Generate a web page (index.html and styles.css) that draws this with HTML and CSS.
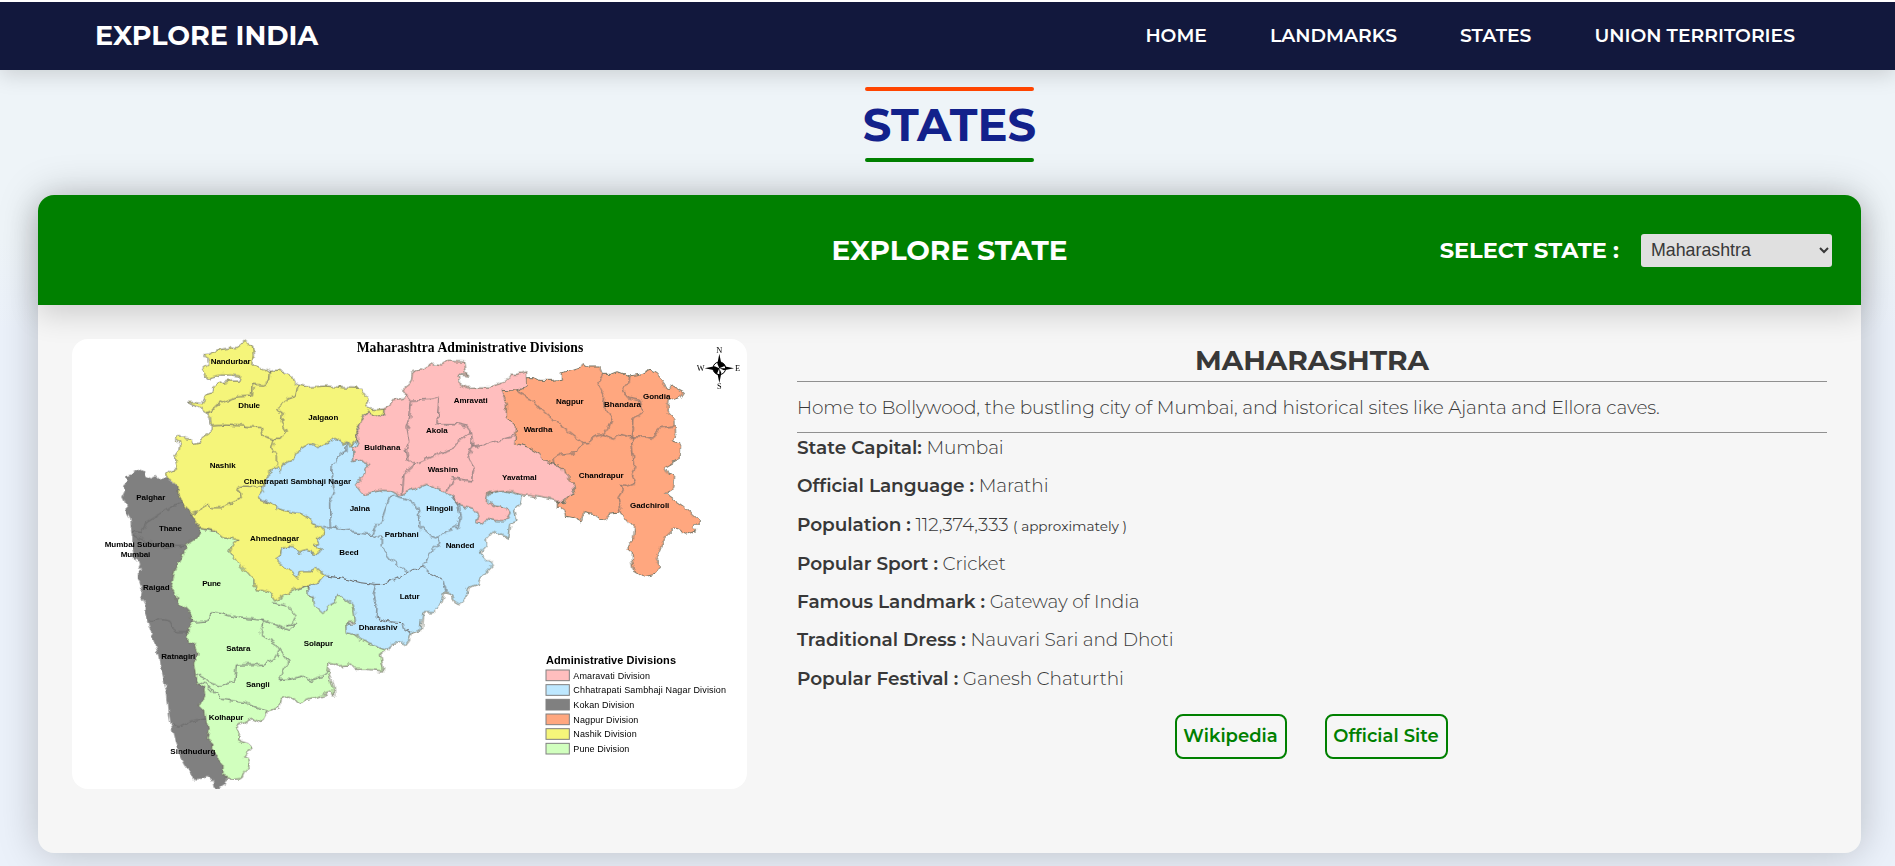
FILE: index.html
```html
<!DOCTYPE html>
<html lang="en">
<head>
<meta charset="utf-8">
<title>Explore India - States</title>
<link rel="stylesheet" href="styles.css">
</head>
<body>
<header class="navbar">
  <a class="brand">EXPLORE INDIA</a>
  <nav class="nav-links">
    <a>HOME</a><a>LANDMARKS</a><a>STATES</a><a>UNION TERRITORIES</a>
  </nav>
</header>
<main class="page">
  <h1 class="page-title"><span>STATES</span></h1>
  <section class="card">
    <div class="card-head">
      <h2 class="card-title">EXPLORE STATE</h2>
      <div class="picker">
        <label class="picker-label" for="state">SELECT STATE :</label>
        <select class="picker-select" id="state"><option>Maharashtra</option></select>
      </div>
    </div>
    <div class="card-body">
      <svg class="map" viewBox="36 27 2025 1350" role="img" aria-label="Maharashtra Administrative Divisions">
        <defs>
          <filter id="rough" x="-5%" y="-5%" width="110%" height="110%" color-interpolation-filters="sRGB">
            <feTurbulence type="fractalNoise" baseFrequency="0.045" numOctaves="2" seed="4"/>
            <feDisplacementMap in="SourceGraphic" scale="20" xChannelSelector="R" yChannelSelector="G"/>
          </filter>
        </defs>
        <g transform="translate(-1 3)">
        <g class="land" filter="url(#rough)">
          <path class="kokan nostroke" transform="translate(90 570)" d="M228-130 210-125 200-135 185-128 168-135 162-152 150-158 135-150 125-140 110-135 110-115 100-105 105-90 98-75 105-60 110-25 122-5 125 30 128 50 128 80 135 120 142 110 148 130 142 142 160 142 145 150 145 170 155 200 150 225 165 255 165 275 172 300 180 325 195 370 205 400 210 430 220 470 232 520 238 580 245 620 255 660 270 700 285 730 295 745 312 778 340 775 352 765 372 780 375 800 390 802 408 790 410 775 425 770 440 740 420 600 400 400 400 200 345 35 340 20 320-10 265-105z"/>
          <path class="pune" transform="translate(90 570)" d="M400 765 432 775 455 772 462 755 478 740 475 715 462 708 488 680 475 668 450 660 452 640 437 615 465 605 485 592 515 605 528 580 528 573 570 560 575 535 600 528 635 548 655 535 700 522 720 515 732 522 730 490 715 455 718 425 745 435 780 432 790 445 835 445 882 450 872 400 890 385 860 370 800 345 770 325 772 305 810 300 800 235 745 215 720 240 695 260 665 230 650 195 560 220 500 170 420 92 445 58 400 40 335 22 320 50 290 70 285 90 275 110 255 150 245 190 260 220 265 245 285 260 305 280 298 290 312 295 308 310 295 325 295 365 315 372 325 395 315 430 320 460 320 485 343 500 345 525 330 555 345 570 350 605 358 630 352 655 370 670 368 690 385 700 385 718 400 735z"/>
          <path class="sambhaji" d="M893 328 950 340 1100 420 1200 480 1280 490 1330 478 1360 485 1385 495 1380 520 1365 535 1372 570 1350 580 1345 622 1300 600 1280 622 1280 645 1262 665 1298 703 1260 745 1255 760 1225 770 1212 810 1200 822 1180 810 1175 790 1155 785 1145 820 1120 845 1090 845 1085 895 1055 905 1050 925 1035 945 1025 930 1000 938 980 955 945 942 900 925 885 910 860 905 858 880 888 878 880 820 835 790 825 815 805 825 790 848 765 825 760 800 745 785 745 765 700 760 640 700 630 660 660 620 620 510 590 495 610 430 665 395 740 330 850 320z"/>
          <path class="nashik" d="M432 72 452 68 480 55 505 52 515 47 532 50 545 40 557 31 565 38 578 44 581 70 577 95 590 105 610 112 632 121 655 117 680 124 697 135 705 155 715 162 750 168 800 165 850 170 905 172 915 190 926 205 920 220 928 233 950 236 972 234 972 248 958 258 940 250 925 243 908 262 905 275 892 292 888 310 893 328 878 335 875 346 862 332 850 340 845 330 825 322 815 332 795 340 775 350 760 340 745 340 720 355 705 372 700 388 685 392 665 405 662 420 652 410 640 415 622 430 618 450 610 480 600 495 605 508 635 520 650 532 680 540 700 545 725 548 750 565 757 578 780 585 793 600 790 615 770 625 780 640 762 645 782 658 775 668 740 658 720 665 700 650 680 648 665 655 662 672 645 680 660 695 690 720 713 742 720 725 755 725 768 710 798 733 780 755 750 765 730 765 690 785 645 810 630 785 610 778 590 780 585 750 555 715 530 690 510 662 520 642 535 628 490 620 465 600 425 592 408 572 395 550 375 530 365 515 355 490 355 465 340 450 318 440 320 430 335 418 350 415 345 380 358 360 360 335 345 325 358 310 375 322 392 325 400 340 425 335 435 315 455 300 455 285 452 262 435 240 418 228 398 222 383 214 410 215 425 218 435 195 458 188 460 165 485 155 510 150 535 150 540 135 510 132 480 132 440 142 437 125 428 115 447 100 445 88z"/>
          <path class="amravati" transform="translate(810)" d="M163 233 180 225 185 210 215 205 230 190 215 180 245 155 248 125 270 118 310 97 335 102 355 88 405 90 410 130 418 135 385 132 390 160 410 170 450 168 480 168 520 155 545 130 560 130 590 122 592 165 600 300 720 400 735 485 700 512 680 510 640 500 570 490 550 480 520 478 475 485 470 510 495 525 530 530 542 545 525 572 500 572 470 565 455 578 438 575 445 555 430 535 390 525 370 500 345 480 320 472 290 460 240 478 210 494 185 480 160 478 100 490 78 462 100 435 120 400 95 388 68 395 70 350 88 340 80 310 95 270 115 245 150 258 163 250z"/>
          <path class="nagpur" transform="translate(1440)" d="M-38 165-38 140-20 140 0 148 40 148 65 145 65 125 100 118 125 110 130 98 145 105 180 105 190 130 215 130 235 122 270 135 300 130 330 115 350 125 375 160 380 172 400 165 432 182 420 200 385 212 382 240 405 265 408 315 395 330 420 335 418 385 375 410 385 430 405 435 402 470 378 485 390 498 430 525 470 560 480 570 460 590 468 600 440 610 425 600 408 588 375 620 350 680 365 705 345 730 315 737 280 715 275 690 275 660 262 650 280 630 285 590 245 545 210 550 195 565 180 565 160 550 132 545 125 573 100 560 75 555 68 530 50 528 50 512 75 512 90 495 108 485 100 455 75 430 70 410 45 400 20 395 0 370-30 352-75 340-70 290-100 260-100 215-115 178-70 180z"/>
          <g class="borders">
            <path d="M632 121 630 150 610 162 578 160 575 195 530 198 495 210 470 222 455 240 440 245M715 162 708 195 680 205 650 235 668 245 665 275 680 300 665 325 640 325 633 350 650 375 650 405M455 285 500 282 550 285 605 290 610 315 640 325M395 548 420 540 440 515 455 530 495 530 510 515 548 500 545 485 525 475 545 465 612 468M215 600 245 605 260 575 300 550 330 530 368 517M218 610 245 625 310 650 345 643 375 643"/>
            <path d="M862 335 862 360 840 368 830 390 818 400 815 440 825 480 810 520 812 590M790 590 812 590 850 595 870 592 880 605 935 610 945 590 965 570 975 540 990 500 1005 492M935 610 965 620 965 645 1000 690 1040 722"/>
            <path transform="translate(810)" d="M200 495 235 505 260 525 270 550 270 590 300 612 328 622 350 602 385 590 392 560 385 520 370 500M328 622 330 640 300 665 280 698M230 190 245 212 240 265 232 290 240 330 230 355 235 385 255 400 220 430 215 490M245 208 300 205 328 200 322 278 380 278 410 285 425 305 430 345M425 305 380 335 365 355 310 375 255 400M430 345 415 380 432 415 425 450 370 440 355 480M430 345 470 340 500 330 555 315"/>
            <path transform="translate(600 570)" d="M200 165 240 170 300 185 345 190 375 190 415 172 440 155 490 135 510 155 550 180 560 215M348 190 340 225 352 260 350 290 380 302 430 305 435 325 455 335"/>
            <path transform="translate(1440)" d="M-70 180-25 205 10 240 50 275 90 305 128 335 110 365 60 370 40 385 42 400M128 335 150 335 155 320 190 310M190 130 175 155 195 195 190 225 218 260 205 290 190 310 225 325 240 310 275 318 320 318 340 322 360 290 405 285M270 135 268 155 250 175 262 198 300 205 310 240 280 265 275 318 280 370 285 410 275 430 285 455 262 465 245 460 248 480 235 500 245 545"/>
            <path transform="translate(90 570)" d="M308 303 355 300 365 272 450 290 520 298 600 328 615 310 590 315 610 300 620 285 590 255 550 245M520 298 512 340 560 370 570 390 555 415 520 430 440 432 435 480 395 495 365 485 320 460M570 380 598 425 565 475 600 475 640 465 655 480 700 465 715 455M320 480 350 490 395 535 470 545 528 573M180 300 215 295 240 300 260 335 295 335M245 612 270 618 310 600 348 590"/>
          </g>
        </g>
        </g>
        <g class="district">
          <text x="452" y="101" textLength="120">Nandurbar</text>
          <text x="535" y="234" textLength="65">Dhule</text>
          <text x="745" y="270" textLength="90">Jalgaon</text>
          <text x="913" y="360" textLength="108">Buldhana</text>
          <text x="449" y="414" textLength="78">Nashik</text>
          <text x="551" y="462" textLength="322">Chhatrapati Sambhaji Nagar</text>
          <text x="229" y="511" textLength="87">Palghar</text>
          <text x="297" y="602" textLength="69">Thane</text>
          <text x="869" y="542" textLength="61">Jalna</text>
          <text x="570" y="634" textLength="147">Ahmednagar</text>
          <text x="134" y="650" textLength="209">Mumbai Suburban</text>
          <text x="182" y="680" textLength="89">Mumbai</text>
          <text x="838" y="674" textLength="58">Beed</text>
          <text x="1181" y="218" textLength="102">Amravati</text>
          <text x="1098" y="310" textLength="65">Akola</text>
          <text x="1103" y="427" textLength="91">Washim</text>
          <text x="1326" y="450" textLength="104">Yavatmal</text>
          <text x="1099" y="543" textLength="80">Hingoli</text>
          <text x="974" y="621" textLength="102">Parbhani</text>
          <text x="1157" y="654" textLength="86">Nanded</text>
          <text x="1391" y="305" textLength="86">Wardha</text>
          <text x="1488" y="222" textLength="83">Nagpur</text>
          <text x="1632" y="232" textLength="111">Bhandara</text>
          <text x="1749" y="206" textLength="82">Gondia</text>
          <text x="1556" y="443" textLength="135">Chandrapur</text>
          <text x="1710" y="535" textLength="118">Gadchiroli</text>
          <text x="427" y="768" textLength="56">Pune</text>
          <text x="249" y="779" textLength="80">Raigad</text>
          <text x="499" y="964" textLength="72">Satara</text>
          <text x="304" y="986" textLength="102">Ratnagiri</text>
          <text x="731" y="947" textLength="88">Solapur</text>
          <text x="558" y="1072" textLength="71">Sangli</text>
          <text x="446" y="1169" textLength="104">Kolhapur</text>
          <text x="331" y="1272" textLength="135">Sindhudurg</text>
          <text x="1019" y="808" textLength="60">Latur</text>
          <text x="896" y="899" textLength="116">Dharashiv</text>
        </g>
        <text class="map-title" x="890" y="66" textLength="680">Maharashtra Administrative Divisions</text>
        <g class="compass" transform="translate(1978 115)">
          <circle r="19"/>
          <path class="ink" d="M0-44 6-14 0 0-6-14zM0 44 6 14 0 0-6 14zM-44 0-14-6 0 0-14 6zM44 0 14-6 0 0 14 6zM0 0V-19A19 19 0 0 1 19 0zM0 0V19A19 19 0 0 1-19 0z"/>
          <text y="-47">N</text><text y="63">S</text><text x="-56" y="8">W</text><text x="55" y="8">E</text>
        </g>
        <text class="legend-title" x="1458" y="1002" textLength="390">Administrative Divisions</text>
        <g class="legend">
          <rect class="amravati" x="1458" y="1020" width="70" height="32"/><text x="1540" y="1047" textLength="230">Amaravati Division</text>
          <rect class="sambhaji" x="1458" y="1064" width="70" height="32"/><text x="1540" y="1090" textLength="458">Chhatrapati Sambhaji Nagar Division</text>
          <rect class="kokan" x="1458" y="1108" width="70" height="32"/><text x="1540" y="1134" textLength="183">Kokan Division</text>
          <rect class="nagpur" x="1458" y="1152" width="70" height="32"/><text x="1540" y="1178" textLength="195">Nagpur Division</text>
          <rect class="nashik" x="1458" y="1196" width="70" height="32"/><text x="1540" y="1222" textLength="190">Nashik Division</text>
          <rect class="pune" x="1458" y="1240" width="70" height="32"/><text x="1540" y="1265" textLength="168">Pune Division</text>
        </g>
      </svg>
      <article class="info">
        <h2 class="info-title">MAHARASHTRA</h2>
        <p class="info-desc">Home to Bollywood, the bustling city of Mumbai, and historical sites like Ajanta and Ellora caves.</p>
        <ul class="facts">
          <li><b>State Capital:</b> Mumbai</li>
          <li><b>Official Language :</b> Marathi</li>
          <li><b>Population :</b> 112,374,333 <small>( approximately )</small></li>
          <li><b>Popular Sport :</b> Cricket</li>
          <li><b>Famous Landmark :</b> Gateway of India</li>
          <li><b>Traditional Dress :</b> Nauvari Sari and Dhoti</li>
          <li><b>Popular Festival :</b> Ganesh Chaturthi</li>
        </ul>
        <div class="actions"><a class="btn wiki">Wikipedia</a><a class="btn site">Official Site</a></div>
      </article>
    </div>
  </section>
</main>
</body>
</html>
```
FILE: styles.css
```css
* { box-sizing: border-box; margin: 0; padding: 0; }
body {
  height: 866px;
  overflow: hidden;
  border-top: 2px solid #fff;
  background: linear-gradient(180deg, #eef4f8 0, #eef4f8 240px, #ebf1fa 330px, #ebf1fa 100%);
  font-family: Montserrat, Inter, "Open Sans", sans-serif;
  color: #383838;
}
.navbar {
  display: flex;
  justify-content: space-between;
  align-items: center;
  height: 68px;
  padding: 0 100px 2px 95px;
  background: #12183d;
  color: #fff;
  box-shadow: 0 5px 20px rgba(0, 0, 0, .15);
}
.brand { font-size: 27px; font-weight: 700; white-space: nowrap; }
.nav-links { display: flex; gap: 63px; font-size: 18.8px; font-weight: 600; white-space: nowrap; }
.page { padding: 17px 34px 0 38px; }
.page-title {
  display: flex;
  flex-direction: column;
  align-items: center;
  height: 75px;
  color: #12218b;
  font-size: 44.8px;
  font-weight: 700;
  line-height: 67px;
}
.page-title::before, .page-title::after { content: ""; width: 169px; height: 4px; border-radius: 2px; background: #ff4500; }
.page-title::after { background: green; }
.page-title span { height: 67px; padding-top: 1px; white-space: nowrap; }
.card {
  height: 658px;
  margin-top: 33px;
  border-radius: 16px;
  background: #f6f6f6;
  box-shadow: 0 0 40px rgba(0, 0, 0, .22);
}
.card-head {
  display: grid;
  grid-template-columns: 1fr auto 1fr;
  align-items: center;
  height: 110px;
  padding: 0 29px;
  border-radius: 16px 16px 0 0;
  background: green;
  color: #fff;
  box-shadow: 0 10px 30px rgba(0, 0, 0, .16);
}
.card-title { grid-column: 2; font-size: 28px; font-weight: 700; white-space: nowrap; }
.picker { display: flex; justify-content: flex-end; align-items: center; gap: 22px; }
.picker-label { font-size: 22.5px; font-weight: 700; white-space: nowrap; }
.picker-select {
  width: 191px;
  height: 33px;
  padding-left: 6px;
  border: 0;
  border-radius: 3px;
  background: #e0e0e0;
  color: #383838;
  font: 17.8px "Liberation Sans", Arial, sans-serif;
}
.card-body { display: flex; gap: 50px; padding: 34px 34px 0; }
.map { flex: none; width: 675px; height: 450px; border-radius: 16px; background: #fff; }
.land > path { stroke: #707060; stroke-width: 3; stroke-linejoin: round; }
.land > .nostroke { stroke: none; }
.borders { fill: none; stroke: #686868; stroke-width: 3; }
.kokan { fill: #808080; }
.pune { fill: #d1ffbe; }
.sambhaji { fill: #bee8ff; }
.nashik { fill: #f5f57a; }
.amravati { fill: #ffbebe; }
.nagpur { fill: #ffa77f; }
.district { fill: #000; font: 700 24px "Liberation Sans", Arial, sans-serif; }
.map-title { font: 700 41px "Liberation Serif", "Times New Roman", serif; }
.compass circle { fill: #fff; stroke: #000; stroke-width: 3; }
.compass text { font: 25px "Liberation Serif", serif; text-anchor: middle; }
.legend-title { font: 700 33px "Liberation Sans", Arial, sans-serif; }
.legend { font: 27px "Liberation Sans", Arial, sans-serif; }
.legend rect { stroke: #808080; stroke-width: 3; }
.info { flex: 1; }
.info-title {
  height: 43px;
  padding-top: 3px;
  border-bottom: 1px solid #909090;
  text-align: center;
  font-size: 28px;
  font-weight: 700;
  line-height: 36px;
}
.info-desc {
  height: 51px;
  border-bottom: 1px solid #909090;
  font-size: 18.5px;
  font-weight: 300;
  letter-spacing: -.1px;
  line-height: 51px;
  white-space: nowrap;
}
.facts { display: flex; flex-direction: column; gap: 14.3px; padding-top: 3px; list-style: none; font-size: 18.5px; font-weight: 300; letter-spacing: -.12px; line-height: 24px; white-space: nowrap; }
.facts b { font-weight: 600; letter-spacing: -.05px; }
.facts small { font-size: 13.6px; font-weight: 400; letter-spacing: 0; }
.actions { display: flex; justify-content: center; gap: 38px; padding: 23px 2px 0 0; }
.btn {
  height: 45px;
  border: 2px solid green;
  border-radius: 8px;
  color: green;
  font-size: 18px;
  font-weight: 600;
  line-height: 41px;
  text-align: center;
}
.wiki { width: 112px; }
.site { width: 123px; }
```
